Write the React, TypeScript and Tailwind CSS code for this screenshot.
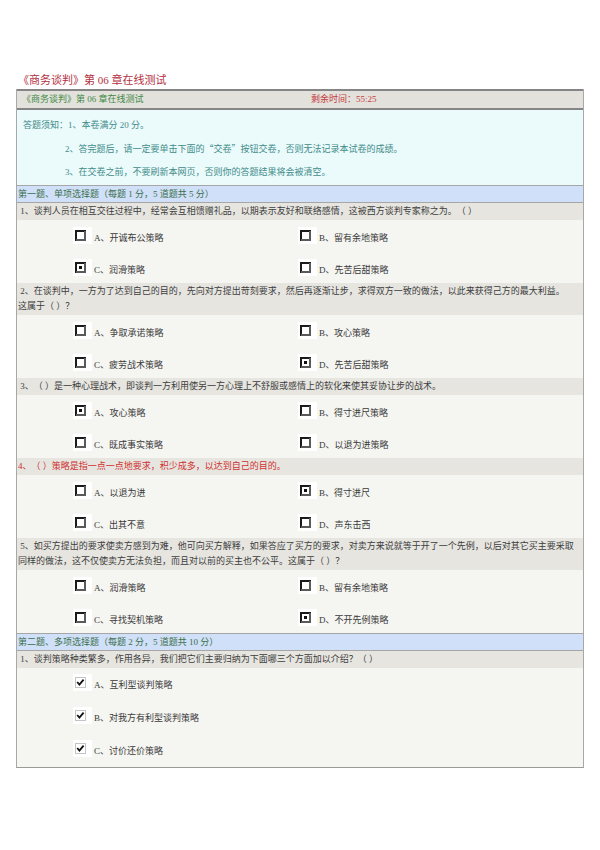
import React from 'react';

type Opt = { label: string; on?: boolean };
type Question = { text: React.ReactNode; red?: boolean; opts: Opt[] };

const SINGLE: Question[] = [
  {
    text: '\u00a01、谈判人员在相互交往过程中，经常会互相馈赠礼品，以期表示友好和联络感情，这被西方谈判专家称之为。（ ）',
    opts: [
      { label: 'A、开诚布公策略' },
      { label: 'B、留有余地策略' },
      { label: 'C、润滑策略', on: true },
      { label: 'D、先苦后甜策略' },
    ],
  },
  {
    text: (
      <>
        {'\u00a02、在谈判中，一方为了达到自己的目的，先向对方提出苛刻要求，然后再逐渐让步，求得双方一致的做法，以此来获得己方的最大利益。'}
        <br />
        这属于（ ）？
      </>
    ),
    opts: [
      { label: 'A、争取承诺策略' },
      { label: 'B、攻心策略' },
      { label: 'C、疲劳战术策略' },
      { label: 'D、先苦后甜策略', on: true },
    ],
  },
  {
    text: '\u00a03、（ ）是一种心理战术，即谈判一方利用使另一方心理上不舒服或感情上的软化来使其妥协让步的战术。',
    opts: [
      { label: 'A、攻心策略', on: true },
      { label: 'B、得寸进尺策略' },
      { label: 'C、既成事实策略' },
      { label: 'D、以退为进策略' },
    ],
  },
  {
    text: '4、（ ）策略是指一点一点地要求，积少成多，以达到自己的目的。',
    red: true,
    opts: [
      { label: 'A、以退为进' },
      { label: 'B、得寸进尺', on: true },
      { label: 'C、出其不意' },
      { label: 'D、声东击西' },
    ],
  },
  {
    text: (
      <>
        {'\u00a05、如买方提出的要求使卖方感到为难，他可向买方解释，如果答应了买方的要求，对卖方来说就等于开了一个先例，以后对其它买主要采取'}
        <br />
        同样的做法，这不仅使卖方无法负担，而且对以前的买主也不公平。这属于（ ）？
      </>
    ),
    opts: [
      { label: 'A、润滑策略' },
      { label: 'B、留有余地策略' },
      { label: 'C、寻找契机策略' },
      { label: 'D、不开先例策略', on: true },
    ],
  },
];

const MULTI: Opt[] = [
  { label: 'A、互利型谈判策略', on: true },
  { label: 'B、对我方有利型谈判策略', on: true },
  { label: 'C、讨价还价策略', on: true },
];

function Radio({ on }: { on?: boolean }) {
  return (
    <span className="flex h-[17px] w-[19px] shrink-0 bg-white pl-[2px] pt-[3px]">
      <svg width="11" height="11" viewBox="0 0 11 11">
        <rect width="11" height="11" fill="#1a1a1a" />
        <rect x="9" y="1" width="2" height="10" fill="#5a5a5a" />
        <rect x="1" y="9" width="10" height="2" fill="#5a5a5a" />
        <rect x="2" y="2" width="7" height="7" fill="#fff" />
        {on && <rect x="4" y="4" width="3" height="3" fill="#111" />}
      </svg>
    </span>
  );
}

function Check() {
  return (
    <span className="flex h-[17px] w-[19px] shrink-0 bg-white pl-[2px] pt-[3px]">
      <svg width="11" height="11" viewBox="0 0 11 11">
        <rect x="0.5" y="0.5" width="10" height="10" fill="#fff" stroke="#c4c4c4" />
        <path d="M2.2 5 L4.4 7.6 L8.6 2.6" fill="none" stroke="#111" strokeWidth="1.8" />
      </svg>
    </span>
  );
}

function Option({ opt, multi }: { opt: Opt; multi?: boolean }) {
  return (
    <div className={multi ? 'h-[33px] pt-[6px]' : 'h-[31.5px] pt-[7px]'}>
      <div className="flex items-end">
        {multi ? <Check /> : <Radio on={opt.on} />}
        <span className="ml-[2px] leading-[12px] text-[#3a3a3a]">{opt.label}</span>
      </div>
    </div>
  );
}

function QRow({ children, red }: { children: React.ReactNode; red?: boolean }) {
  return (
    <div
      className={`bg-[#e6e5e0] py-[1px] pl-[1px] leading-[15px] ${red ? 'text-[#d0302f]' : 'text-[#3d3d3d]'}`}
    >
      {children}
    </div>
  );
}

export default function App() {
  return (
    <div className="min-h-[850px] bg-white px-[16px] pt-[73px] font-['Liberation_Serif','Noto_Sans_CJK_SC',serif] text-[9px] [text-spacing-trim:space-all]">
      <h1 className="mb-[2px] pl-[2px] text-[11px] leading-[14px] text-[#b3323f]">《商务谈判》第 06 章在线测试</h1>

      <div className="border-x border-b border-x-[#a8a8a8] border-b-[#9a9a9a]">
        {/* header */}
        <div className="flex h-[21px] items-center border-y-2 border-[#858585] bg-[#e3e1dc]">
          <div className="w-[294px] pl-[5px] text-[#3f8a44]">《商务谈判》第 06 章在线测试</div>
          <div className="text-[#c53b41]">剩余时间：55:25</div>
        </div>

        {/* notice */}
        <div className="bg-[#ebfafb] pb-[1px] pl-[6px] pt-[4px] leading-[23px] text-[#3f8c8a]">
          <div>答题须知：1、本卷满分 20 分。</div>
          <div className="pl-[42px]">
            2、答完题后，请一定要单击下面的<span className="font-['Noto_Sans_CJK_SC',sans-serif]">“</span>交卷<span className="font-['Noto_Sans_CJK_SC',sans-serif]">”</span>按钮交卷，否则无法记录本试卷的成绩。
          </div>
          <div className="pl-[42px]">3、在交卷之前，不要刷新本网页，否则你的答题结果将会被清空。</div>
        </div>

        {/* section 1 */}
        <div className="border-y border-[#a6a6a6] bg-[#d0e0f8] pl-[1px] leading-[16px] text-[#3b6f4c]">
          第一题、单项选择题（每题 1 分，5 道题共 5 分）
        </div>
        {SINGLE.map((q, i) => (
          <div key={i}>
            <QRow red={q.red}>{q.text}</QRow>
            <div className="grid grid-cols-[225px_1fr] bg-[#f5f5f1] pl-[56px]">
              {q.opts.map(o => (
                <Option key={o.label} opt={o} />
              ))}
            </div>
          </div>
        ))}

        {/* section 2 */}
        <div className="border-y border-[#a6a6a6] bg-[#d0e0f8] pl-[1px] leading-[16px] text-[#3b6f4c]">
          第二题、多项选择题（每题 2 分，5 道题共 10 分）
        </div>
        <QRow>{'\u00a01、谈判策略种类繁多，作用各异，我们把它们主要归纳为下面哪三个方面加以介绍？（ ）'}</QRow>
        <div className="bg-[#f5f5f1] pl-[56px]">
          {MULTI.map(o => (
            <Option key={o.label} opt={o} multi />
          ))}
        </div>
      </div>
    </div>
  );
}
